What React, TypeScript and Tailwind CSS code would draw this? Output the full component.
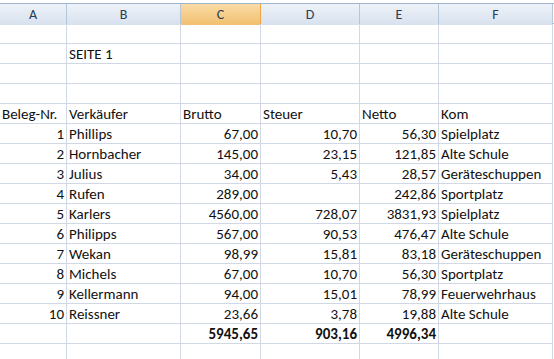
import React from 'react';

type Row = {
  nr?: number;
  name?: string;
  brutto?: string;
  steuer?: string;
  netto?: string;
  kom?: string;
};

const rows: Row[] = [
  { nr: 1, name: 'Phillips', brutto: '67,00', steuer: '10,70', netto: '56,30', kom: 'Spielplatz' },
  { nr: 2, name: 'Hornbacher', brutto: '145,00', steuer: '23,15', netto: '121,85', kom: 'Alte Schule' },
  { nr: 3, name: 'Julius', brutto: '34,00', steuer: '5,43', netto: '28,57', kom: 'Geräteschuppen' },
  { nr: 4, name: 'Rufen', brutto: '289,00', steuer: '', netto: '242,86', kom: 'Sportplatz' },
  { nr: 5, name: 'Karlers', brutto: '4560,00', steuer: '728,07', netto: '3831,93', kom: 'Spielplatz' },
  { nr: 6, name: 'Philipps', brutto: '567,00', steuer: '90,53', netto: '476,47', kom: 'Alte Schule' },
  { nr: 7, name: 'Wekan', brutto: '98,99', steuer: '15,81', netto: '83,18', kom: 'Geräteschuppen' },
  { nr: 8, name: 'Michels', brutto: '67,00', steuer: '10,70', netto: '56,30', kom: 'Sportplatz' },
  { nr: 9, name: 'Kellermann', brutto: '94,00', steuer: '15,01', netto: '78,99', kom: 'Feuerwehrhaus' },
  { nr: 10, name: 'Reissner', brutto: '23,66', steuer: '3,78', netto: '19,88', kom: 'Alte Schule' },
];

const cols = 'grid grid-cols-[67px_114px_80px_99px_79px_114px]';

function Cell({ children, right, bold }: { children?: React.ReactNode; right?: boolean; bold?: boolean }) {
  return (
    <div
      className={`h-[20px] border-r border-b border-[#d0d7e5] flex items-end pb-[1px] px-[2px] whitespace-nowrap overflow-visible leading-none ${
        right ? 'justify-end' : 'justify-start'
      } ${bold ? 'font-bold' : ''}`}
    >
      {children}
    </div>
  );
}

function EmptyRow() {
  return (
    <div className={cols}>
      <Cell />
      <Cell />
      <Cell />
      <Cell />
      <Cell />
      <Cell />
    </div>
  );
}

export default function App() {
  const heads = ['A', 'B', 'C', 'D', 'E', 'F'];

  return (
    <div
      className="w-[554px] h-[359px] overflow-hidden bg-white text-[#111] text-[15px]"
      style={{ fontFamily: 'Carlito, Lato, "Open Sans", sans-serif' }}
    >
      <div className="h-[3px]" />
      {/* column headers */}
      <div className={`${cols} h-[21px] border-t border-b border-[#9eb6ce]`}>
        {heads.map((h) =>
          h === 'C' ? (
            <div
              key={h}
              className="border-r border-[#f2a340] bg-gradient-to-b from-[#f9dca5] to-[#f1bf6f] flex items-center justify-center text-[#2b3d52] text-[14px]"
            >
              {h}
            </div>
          ) : (
            <div
              key={h}
              className="border-r border-[#b6c6da] bg-gradient-to-b from-[#eef2f8] to-[#d7e1ee] flex items-center justify-center text-[#2b3d52] text-[14px]"
            >
              {h}
            </div>
          )
        )}
      </div>

      <EmptyRow />
      <div className={cols}>
        <Cell />
        <Cell>SEITE 1</Cell>
        <Cell />
        <Cell />
        <Cell />
        <Cell />
      </div>
      <EmptyRow />
      <EmptyRow />

      <div className={cols}>
        <Cell>Beleg-Nr.</Cell>
        <Cell>Verkäufer</Cell>
        <Cell>Brutto</Cell>
        <Cell>Steuer</Cell>
        <Cell>Netto</Cell>
        <Cell>Kom</Cell>
      </div>

      {rows.map((r) => (
        <div key={r.nr} className={cols}>
          <Cell right>{r.nr}</Cell>
          <Cell>{r.name}</Cell>
          <Cell right>{r.brutto}</Cell>
          <Cell right>{r.steuer}</Cell>
          <Cell right>{r.netto}</Cell>
          <Cell>{r.kom}</Cell>
        </div>
      ))}

      <div className={cols}>
        <Cell />
        <Cell />
        <Cell right bold>5945,65</Cell>
        <Cell right bold>903,16</Cell>
        <Cell right bold>4996,34</Cell>
        <Cell />
      </div>
      <EmptyRow />
    </div>
  );
}
